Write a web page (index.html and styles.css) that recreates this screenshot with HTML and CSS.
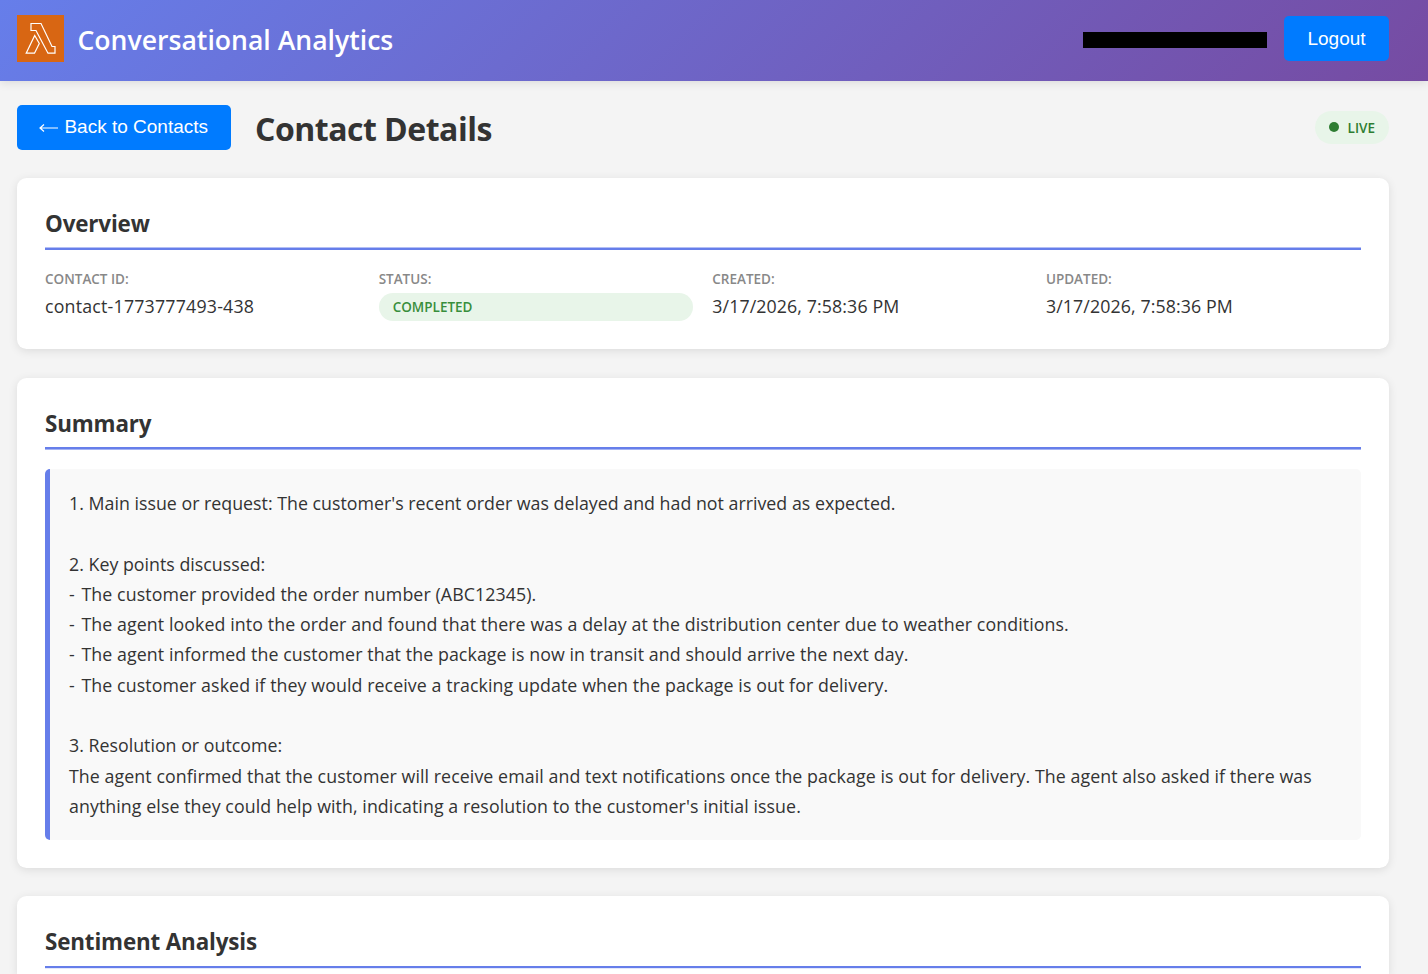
FILE: index.html
```
<!DOCTYPE html>
<html lang="en">
<head>
    <meta charset="UTF-8">
    <meta name="viewport" content="width=device-width, initial-scale=1.0">
    <title>Conversational Analytics</title>
    <link rel="stylesheet" href="styles.css">
</head>
<body>
    <header class="app-header">
        <div class="brand">
            <svg class="logo" viewBox="0 0 47 47">
                <rect width="47" height="47" fill="#d86613"/>
                <path d="M14 8.500H24L35 31.500H38V38.200H31L19 15.500H14ZM17.700 20.500L22.300 28.500L17.500 38.200H9.200Z" fill="none" stroke="#fff" stroke-width="1.200"/>
            </svg>
            <h1>Conversational Analytics</h1>
        </div>
        <div class="user-info">
            <span class="user-email"></span>
            <button class="btn btn-logout">Logout</button>
        </div>
    </header>

    <main class="container">
        <div class="page-header">
            <button class="btn btn-back">
                <svg class="arrow" viewBox="0 0 19 10"><path d="M19 5H1M5 1.500L1 5L5 8.500" fill="none" stroke="#fff" stroke-width="1.200"/></svg>
                <span>Back to Contacts</span>
            </button>
            <h2>Contact Details</h2>
            <span class="live"><i class="dot"></i><span>LIVE</span></span>
        </div>

        <section class="card overview">
            <h3>Overview</h3>
            <div class="grid">
                <div class="item">
                    <label>Contact ID:</label>
                    <span class="value value-id">contact-1773777493-438</span>
                </div>
                <div class="item">
                    <label>Status:</label>
                    <span class="status">Completed</span>
                </div>
                <div class="item">
                    <label>Created:</label>
                    <span class="value">3/17/2026, 7:58:36 PM</span>
                </div>
                <div class="item">
                    <label>Updated:</label>
                    <span class="value">3/17/2026, 7:58:36 PM</span>
                </div>
            </div>
        </section>

        <section class="card summary">
            <h3>Summary</h3>
            <div class="summary-text">
                <p class="issue">1. Main issue or request: The customer's recent order was delayed and had not arrived as expected.</p>
                <br>
                <p class="topic">2. Key points discussed:</p>
                <p class="point">- The customer provided the order number (ABC12345).</p>
                <p class="point">- The agent looked into the order and found that there was a delay at the distribution center due to weather conditions.</p>
                <p class="point">- The agent informed the customer that the package is now in transit and should arrive the next day.</p>
                <p class="point">- The customer asked if they would receive a tracking update when the package is out for delivery.</p>
                <br>
                <p class="topic">3. Resolution or outcome:</p>
                <p>The agent confirmed that the customer will receive email and text notifications once the package is out for delivery. The agent also asked if there was<br>anything else they could help with, indicating a resolution to the customer's initial issue.</p>
            </div>
        </section>

        <section class="card sentiment">
            <h3>Sentiment Analysis</h3>
        </section>
    </main>
</body>
</html>
```
FILE: styles.css
```
* {
    margin: 0;
    padding: 0;
    box-sizing: border-box;
}

body {
    background-color: #f4f4f4;
    color: #333;
    font-family: "Segoe UI", "Open Sans", "Noto Sans", sans-serif;
    font-size: 17.8px;
}

.app-header {
    display: flex;
    justify-content: space-between;
    align-items: center;
    height: 81px;
    padding: 0 39px 4px 16.5px;
    background: linear-gradient(135deg, #667eea 0%, #764ba2 100%);
    box-shadow: 0 2px 9px rgba(0, 0, 0, 0.1);
}

.brand {
    display: flex;
    align-items: center;
    gap: 14px;
}

.logo {
    width: 47px;
    height: 47px;
}

.brand h1 {
    color: #fff;
    font-size: 26.6px;
    font-weight: 600;
    line-height: 36px;
    white-space: nowrap;
    padding-top: 3px;
}

.user-info {
    display: flex;
    align-items: center;
    gap: 17px;
}

.user-email {
    width: 184px;
    height: 16px;
    margin-top: 3px;
    background-color: #000;
}

.btn {
    display: flex;
    align-items: center;
    justify-content: center;
    height: 45px;
    border: none;
    border-radius: 5px;
    background-color: #007bff;
    color: #fff;
    font-family: "Liberation Sans", Arial, sans-serif;
    font-size: 19px;
    cursor: pointer;
}

.btn-logout {
    width: 105px;
}

.btn-back {
    width: 214.5px;
    gap: 6px;
    padding-bottom: 2px;
}

.arrow {
    width: 19px;
    height: 10px;
    margin-top: 3px;
}

.container {
    padding: 24px 39px 0 16.5px;
}

.page-header {
    display: flex;
    align-items: center;
    height: 45px;
    margin-bottom: 28px;
}

.page-header h2 {
    margin-left: 24px;
    padding-top: 2px;
    font-size: 32px;
    font-weight: 700;
    letter-spacing: -0.5px;
    line-height: 44px;
    white-space: nowrap;
}

.live {
    display: flex;
    align-items: center;
    gap: 9px;
    height: 33px;
    margin-left: auto;
    padding: 0 14px;
    border-radius: 17px;
    background-color: #e8f5e9;
    color: #2e7d32;
    font-size: 13.5px;
    font-weight: 600;
}

.dot {
    width: 10px;
    height: 10px;
    margin-bottom: 1px;
    border-radius: 50%;
    background-color: #2e7d32;
}

.card {
    margin-bottom: 28px;
    padding: 28px 28.5px 0;
    border-radius: 9.5px;
    background-color: #fff;
    box-shadow: 0 2px 10px rgba(0, 0, 0, 0.1);
}

.card h3 {
    height: 44px;
    border-bottom: 2px solid #667eea;
    font-size: 22.4px;
    font-weight: 700;
    letter-spacing: -0.15px;
    line-height: 35px;
    white-space: nowrap;
}

.overview {
    height: 171px;
    margin-bottom: 29px;
}

.overview h3 {
    box-shadow: inset 0 -1px 0 #b3bff5;
}

.summary {
    height: 490px;
}

.summary h3 {
    height: 43px;
    margin-bottom: 20px;
    box-shadow: 0 1px 0 #a5b3f3;
}

.sentiment {
    height: 78px;
    margin-bottom: 0;
    border-radius: 9.5px 9.5px 0 0;
}

.sentiment h3 {
    box-shadow: 0 1px 0 #e3e7fc;
}

.grid {
    display: grid;
    grid-template-columns: repeat(4, 1fr);
    gap: 19px;
    margin-top: 19px;
}

.item {
    display: flex;
    flex-direction: column;
}

.item label {
    height: 24px;
    color: #888;
    font-size: 13.5px;
    font-weight: 600;
    line-height: 20px;
    text-transform: uppercase;
}

.value {
    letter-spacing: 0.1px;
    line-height: 26px;
    white-space: nowrap;
}

.value-id {
    letter-spacing: 0.2px;
}

.status {
    height: 28px;
    padding: 0 14px;
    border-radius: 14px;
    background-color: #e8f5e9;
    color: #388e3c;
    font-size: 13.5px;
    font-weight: 600;
    line-height: 29px;
    text-transform: uppercase;
}

.summary-text {
    height: 371px;
    padding: 19px 19px;
    border-left: 5px solid #667eea;
    border-radius: 5px;
    background-color: #f9f9f9;
    letter-spacing: 0.075px;
    line-height: 30.3px;
    white-space: nowrap;
}

.summary-text .issue,
.summary-text .topic {
    letter-spacing: 0.01px;
}

.summary-text .point {
    letter-spacing: 0.085px;
}

/* a little more room after the dash */
.summary-text .point::first-letter {
    letter-spacing: 2px;
}
```
